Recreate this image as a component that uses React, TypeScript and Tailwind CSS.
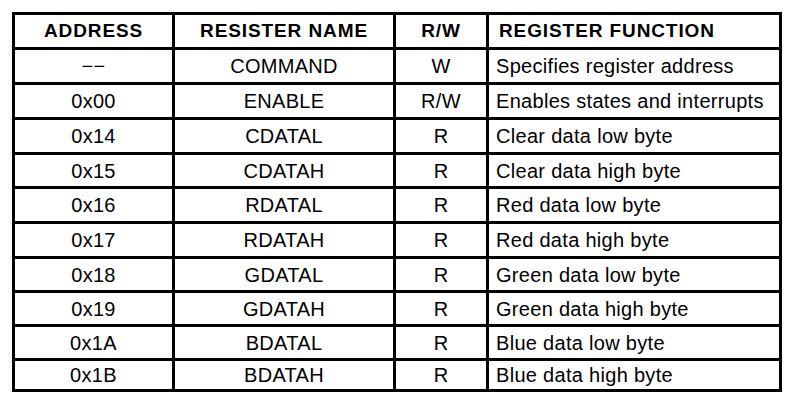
import React from "react";

const rows: [string, string, string, string, number][] = [
  ["−−", "COMMAND", "W", "Specifies register address", 32],
  ["0x00", "ENABLE", "R/W", "Enables states and interrupts", 32],
  ["0x14", "CDATAL", "R", "Clear data low byte", 32],
  ["0x15", "CDATAH", "R", "Clear data high byte", 31],
  ["0x16", "RDATAL", "R", "Red data low byte", 32],
  ["0x17", "RDATAH", "R", "Red data high byte", 32],
  ["0x18", "GDATAL", "R", "Green data low byte", 31],
  ["0x19", "GDATAH", "R", "Green data high byte", 31],
  ["0x1A", "BDATAL", "R", "Blue data low byte", 31],
  ["0x1B", "BDATAH", "R", "Blue data high byte", 28],
];

const App = () => {
  return (
    <div className="w-[794px] h-[401px] bg-white pt-[12px] pl-[12px] text-black font-['Liberation_Sans',Arial,sans-serif]">
      <div className="w-[770px] border-[3px] border-black">
        {/* header */}
        <div className="flex h-[35px] border-b-[3px] border-black text-[19px] font-bold tracking-[0.9px]">
          <div className="w-[160px] border-r-[3px] border-black flex items-center justify-center">ADDRESS</div>
          <div className="w-[221px] border-r-[3px] border-black flex items-center justify-center">RESISTER NAME</div>
          <div className="w-[93px] border-r-[3px] border-black flex items-center justify-center">R/W</div>
          <div className="flex-1 flex items-center pl-[10px]">REGISTER FUNCTION</div>
        </div>
        {rows.map(([addr, name, rw, fn, h], i) => (
          <div
            key={addr}
            className={
              i < rows.length - 1
                ? "flex border-b-[3px] border-black text-[20px] tracking-[0.3px]"
                : "flex text-[20px] tracking-[0.3px]"
            }
            style={{ height: h + (i < rows.length - 1 ? 3 : 0) }}
          >
            <div className="w-[160px] border-r-[3px] border-black flex items-center justify-center">{addr}</div>
            <div className="w-[221px] border-r-[3px] border-black flex items-center justify-center">{name}</div>
            <div className="w-[93px] border-r-[3px] border-black flex items-center justify-center">{rw}</div>
            <div className="flex-1 flex items-center pl-[7px]">{fn}</div>
          </div>
        ))}
      </div>
    </div>
  );
};

export default App;
